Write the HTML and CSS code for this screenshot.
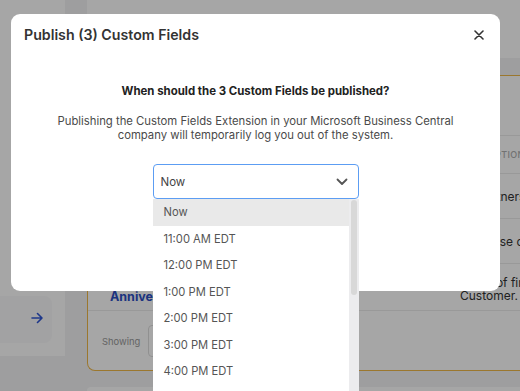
FILE: index.html
```html
<!DOCTYPE html>
<html lang="en">
<head>
    <meta charset="UTF-8">
    <meta name="viewport" content="width=device-width, initial-scale=1.0">
    <title>Publish Custom Fields</title>
    <link rel="stylesheet" href="styles.css">
</head>
<body>

    <div class="page">
        <aside class="sidebar">
            <div class="side-card">
                <svg class="arrow" width="12" height="12" viewBox="0 0 12 12">
                    <path d="M1 6h10M6.5 1.5 11 6l-4.5 4.5" fill="none" stroke="#2f55d4" stroke-width="1.6" stroke-linecap="round" stroke-linejoin="round"/>
                </svg>
            </div>
        </aside>
        <main class="main">
            <div class="topbar"></div>
            <section class="fields-card">
                <div class="card-head"></div>
                <div class="field-row head-row">
                    <div class="name-col">NAME</div>
                    <div class="desc-col">DESCRIPTION</div>
                </div>
                <div class="field-row">
                    <div class="name-col"><span class="link">Top Partners</span></div>
                    <div class="desc-col">All Partners</div>
                </div>
                <div class="field-row">
                    <div class="name-col"><span class="link">Purchase Order</span></div>
                    <div class="desc-col">Purchase order</div>
                </div>
                <div class="field-row tall-row">
                    <div class="name-col"><span class="link">Customer<br>Anniversary</span></div>
                    <div class="desc-col">Dates of first Customer.</div>
                </div>
                <div class="pager">
                    <span>Showing</span>
                    <div class="pager-box"></div>
                </div>
            </section>
            <div class="next-card"></div>
        </main>
    </div>

    <div class="overlay">
        <div class="modal">
            <div class="modal-header">
                <h2>Publish (3) Custom Fields</h2>
                <svg class="close" width="10" height="10" viewBox="0 0 10 10">
                    <path d="M1 1l8 8M9 1 1 9" stroke="#333" stroke-width="1.6" stroke-linecap="round"/>
                </svg>
            </div>
            <div class="modal-body">
                <p class="question">When should the 3 Custom Fields be published?</p>
                <p class="note">Publishing the Custom Fields Extension in your Microsoft Business Central<br>company will temporarily log you out of the system.</p>
                <div class="picker">
                    <div class="picker-value">
                        <span>Now</span>
                        <svg width="12" height="8" viewBox="0 0 12 8">
                            <path d="M1.5 1.5 6 6l4.5-4.5" fill="none" stroke="#555" stroke-width="1.8" stroke-linecap="round" stroke-linejoin="round"/>
                        </svg>
                    </div>
                    <div class="picker-list">
                        <ul class="options">
                            <li class="active">Now</li>
                            <li>11:00 AM EDT</li>
                            <li>12:00 PM EDT</li>
                            <li>1:00 PM EDT</li>
                            <li>2:00 PM EDT</li>
                            <li>3:00 PM EDT</li>
                            <li>4:00 PM EDT</li>
                        </ul>
                        <div class="track"><div class="thumb"></div></div>
                    </div>
                </div>
            </div>
        </div>
    </div>

</body>
</html>
```

FILE: styles.css
```css
body {
  margin: 0;
  font-family: 'Inter', 'Noto Sans', sans-serif;
  background: #f3f3f4;
  color: #333;
  overflow: hidden;
  height: 391px;
}

.page {
  display: flex;
  gap: 22px;
}

.sidebar {
  width: 65px;
  height: 356px;
  background: #fff;
  padding-top: 296px;
  box-sizing: border-box;
}

.side-card {
  width: 52px;
  height: 47px;
  background: #f9f9fa;
  border-radius: 0 8px 8px 0;
  display: flex;
  align-items: center;
  justify-content: flex-end;
  padding: 0 9px 4px 0;
  box-sizing: border-box;
}

.main {
  flex: 1;
  min-width: 0;
}

.topbar {
  height: 58px;
  background: #fff;
}

.fields-card {
  margin-top: 17px;
  height: 296px;
  background: #fff;
  border: 1px solid #efb747;
  border-right: none;
  border-radius: 8px 0 0 8px;
  box-sizing: border-box;
  overflow: hidden;
}

.card-head {
  height: 59px;
  border-bottom: 1px solid #ececec;
}

.field-row {
  display: grid;
  grid-template-columns: 372px 110px;
  align-items: center;
  height: 44px;
  border-bottom: 1px solid #ececec;
  font-size: 12px;
}

.head-row {
  height: 37px;
  font-size: 9px;
  font-weight: 500;
  color: #b0b0b0;
  letter-spacing: 0.4px;
}

.tall-row {
  height: 46px;
}

.name-col {
  padding-left: 22px;
}

.desc-col {
  color: #333;
  line-height: 13px;
  white-space: nowrap;
}

.head-row .desc-col {
  color: #b0b0b0;
}

.tall-row .desc-col {
  white-space: normal;
  padding-top: 3px;
}

.link {
  color: #2b4fc4;
  font-weight: 700;
  font-size: 12.5px;
  line-height: 13px;
  display: inline-block;
  padding-top: 6px;
}

.pager {
  display: flex;
  align-items: center;
  gap: 8px;
  padding: 14px 14px;
  font-size: 9.4px;
  color: #999;
}

.pager-box {
  width: 120px;
  height: 30px;
  border: 1px solid #ddd;
  border-radius: 4px;
}

.next-card {
  margin-top: 16px;
  height: 4px;
  background: #fff;
  border-radius: 8px 0 0 0;
}

.overlay {
  position: fixed;
  inset: 0;
  background: rgba(0, 0, 0, 0.35);
  padding: 14px 20px 0 11px;
}

.modal {
  background: #fff;
  border-radius: 9px;
  height: 277px;
}

.modal-header {
  display: flex;
  align-items: center;
  justify-content: space-between;
  padding: 11px 16px 0 13px;
}

.modal-header h2 {
  margin: 0;
  font-size: 14.2px;
  font-weight: 600;
  line-height: 20px;
  color: #333;
}

.modal-body {
  text-align: center;
  padding-top: 38px;
}

.question {
  margin: 0;
  font-size: 11.45px;
  font-weight: 700;
  color: #222;
  line-height: 16px;
}

.note {
  margin: 15px 0 0;
  font-size: 11.3px;
  color: #4a4a4a;
  line-height: 14px;
}

.picker {
  position: relative;
  width: 206px;
  margin: 22px auto 0;
  text-align: left;
}

.picker-value {
  height: 35px;
  border: 1px solid #5c9df3;
  border-radius: 4px;
  box-sizing: border-box;
  display: flex;
  align-items: center;
  justify-content: space-between;
  padding: 0 10px 0 7px;
  font-size: 11.5px;
  color: #444;
}

.picker-list {
  position: absolute;
  top: 35px;
  left: 0;
  right: 0;
  height: 192px;
  background: #fff;
  display: flex;
}

.options {
  flex: 1;
  margin: 0;
  padding: 0;
  list-style: none;
}

.options li {
  height: 26.5px;
  line-height: 26.5px;
  padding-left: 11px;
  font-size: 11.2px;
  color: #555;
}

.options li.active {
  background: #e9e9e9;
}

.track {
  width: 10px;
  background: #ececee;
  padding: 1px 2px 0;
  box-sizing: border-box;
}

.thumb {
  height: 95px;
  background: #d8d8d8;
  border-radius: 3px;
}
```
